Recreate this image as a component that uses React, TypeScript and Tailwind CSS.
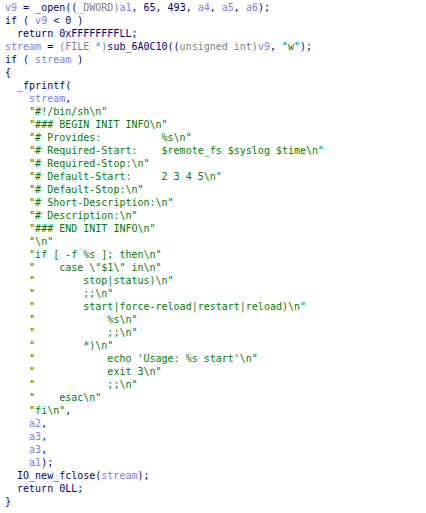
import React from "react";

type Seg = [string, "n" | "v" | "g" | "s"];

const colorClass: Record<Seg[1], string> = {
  n: "text-[#000080]",
  v: "text-[#7b7bff]",
  g: "text-[#808080]",
  s: "text-[#008000]",
};

const str = (indent: string, body: string): Seg[] => [
  ["    ", "n"],
  ['"' + indent + body + '"', "s"],
];

const lines: Seg[][] = [
  [
    ["v9", "v"],
    [" = _open((", "n"],
    ["_DWORD)", "g"],
    ["a1", "v"],
    [", 65, 493, ", "n"],
    ["a4", "v"],
    [", ", "n"],
    ["a5", "v"],
    [", ", "n"],
    ["a6", "v"],
    [");", "n"],
  ],
  [
    ["if ( ", "n"],
    ["v9", "v"],
    [" < 0 )", "n"],
  ],
  [["  return 0xFFFFFFFFLL;", "n"]],
  [
    ["stream", "v"],
    [" = ", "n"],
    ["(FILE *)", "g"],
    ["sub_6A0C10((", "n"],
    ["unsigned int)", "g"],
    ["v9", "v"],
    [", ", "n"],
    ['"w"', "s"],
    [");", "n"],
  ],
  [
    ["if ( ", "n"],
    ["stream", "v"],
    [" )", "n"],
  ],
  [["{", "n"]],
  [["  _fprintf(", "n"]],
  [
    ["    ", "n"],
    ["stream", "v"],
    [",", "n"],
  ],
  str("", "#!/bin/sh\\n"),
  str("", "### BEGIN INIT INFO\\n"),
  str("", "# Provides:          %s\\n"),
  str("", "# Required-Start:    $remote_fs $syslog $time\\n"),
  str("", "# Required-Stop:\\n"),
  str("", "# Default-Start:     2 3 4 5\\n"),
  str("", "# Default-Stop:\\n"),
  str("", "# Short-Description:\\n"),
  str("", "# Description:\\n"),
  str("", "### END INIT INFO\\n"),
  str("", "\\n"),
  str("", "if [ -f %s ]; then\\n"),
  str("    ", 'case \\"$1\\" in\\n'),
  str("        ", "stop|status)\\n"),
  str("        ", ";;\\n"),
  str("        ", "start|force-reload|restart|reload)\\n"),
  str("            ", "%s\\n"),
  str("            ", ";;\\n"),
  str("        ", "*)\\n"),
  str("            ", "echo 'Usage: %s start'\\n"),
  str("            ", "exit 3\\n"),
  str("            ", ";;\\n"),
  str("    ", "esac\\n"),
  [...str("", "fi\\n"), [",", "n"]],
  [
    ["    ", "n"],
    ["a2", "v"],
    [",", "n"],
  ],
  [
    ["    ", "n"],
    ["a3", "v"],
    [",", "n"],
  ],
  [
    ["    ", "n"],
    ["a3", "v"],
    [",", "n"],
  ],
  [
    ["    ", "n"],
    ["a1", "v"],
    [");", "n"],
  ],
  [
    ["  IO_new_fclose(", "n"],
    ["stream", "v"],
    [");", "n"],
  ],
  [["  return 0LL;", "n"]],
  [["}", "n"]],
];

export default function App() {
  return (
    <div className="w-[426px] h-[513px] bg-white overflow-hidden pt-[1px] pl-[5px]">
      <div className="font-['DejaVu_Sans_Mono','Liberation_Mono',monospace] text-[10px] leading-[13px]">
        {lines.map((line, i) => (
          <div key={i} className="whitespace-pre h-[13px]">
            {line.map(([text, kind], j) => (
              <span key={j} className={colorClass[kind]}>
                {text}
              </span>
            ))}
          </div>
        ))}
      </div>
    </div>
  );
}
